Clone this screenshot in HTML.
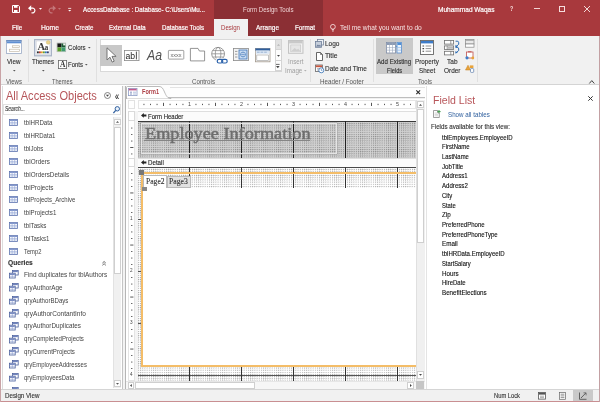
<!DOCTYPE html>
<html><head><meta charset="utf-8"><title>Access</title>
<style>
*{box-sizing:border-box;margin:0;padding:0}
html,body{width:600px;height:402px;overflow:hidden;background:#fff}
body{font-family:"Liberation Sans",sans-serif;font-size:8px;color:#333;position:relative}
.a{position:absolute;white-space:nowrap}
svg{position:absolute;overflow:visible}
#w{position:absolute;left:0;top:0;width:600px;height:402px;will-change:transform}
</style></head><body><div id="w">
<div class="a" style="left:0px;top:0px;width:600px;height:36px;background:#a8393d;"></div>
<div class="a" style="left:214px;top:0px;width:109px;height:36px;background:#8b2f34;"></div>
<div class="a" style="left:214px;top:19.3px;width:34px;height:16.7px;background:#f1f1f1;"></div>
<div class="a" style="left:534px;top:8px;width:6px;height:0.9px;background:#f3d3d4;"></div>
<div class="a" style="left:558.7px;top:5.8px;width:6.4px;height:5.9px;border:0.9px solid #f6dede"></div>
<svg style="left:584px;top:5.8px" width="6" height="6"><path d="M0 0L6 6M6 0L0 6" stroke="#fbeaea" stroke-width="0.9" fill="none"/></svg>
<svg style="left:330.2px;top:23.6px" width="6" height="8"><circle cx="2.9" cy="2.8" r="2.4" fill="none" stroke="#fbeaea" stroke-width="0.8"/><path d="M1.8 5.7h2.2M2 7h1.8" stroke="#fbeaea" stroke-width="0.8"/></svg>
<svg style="left:12px;top:5.3px" width="8" height="8"><path d="M0.5 0.5h6l1 1v6h-7z" fill="none" stroke="#fff" stroke-width="1"/><rect x="2" y="0.5" width="3.5" height="2.3" fill="#fff"/><rect x="2" y="5" width="3.5" height="2.5" fill="#fff"/></svg>
<svg style="left:27.5px;top:5.2px" width="9" height="8"><path d="M1 3.2h4.2a2.4 2.4 0 0 1 0 4.6H3.5" fill="none" stroke="#fff" stroke-width="1.2"/><path d="M0 3.2L3.2 0.3V6.1z" fill="#fff"/></svg>
<svg style="left:38.8px;top:8.4px" width="3" height="2"><path d="M0 0h3L1.5 1.8z" fill="#fff"/></svg>
<svg style="left:46.6px;top:5.2px" width="9" height="8"><path d="M8 3.2H3.8a2.4 2.4 0 0 0 0 4.6H5.5" fill="none" stroke="#c4777a" stroke-width="1.2"/><path d="M9 3.2L5.8 0.3V6.1z" fill="#c4777a"/></svg>
<svg style="left:57.6px;top:8.4px" width="3" height="2"><path d="M0 0h3L1.5 1.8z" fill="#c4777a"/></svg>
<svg style="left:68px;top:7.6px" width="4" height="5"><path d="M0.2 0.4h3" stroke="#fff" stroke-width="0.8"/><path d="M0.2 1.9h3L1.7 3.6z" fill="#fff"/></svg>
<div class="a" style="left:0px;top:36px;width:600px;height:49.4px;background:#f1f1f1;border-bottom:1px solid #d4d4d4"></div>
<div class="a" style="left:28px;top:39px;width:1px;height:43px;background:#e0e0e0;"></div>
<div class="a" style="left:96px;top:39px;width:1px;height:43px;background:#e0e0e0;"></div>
<div class="a" style="left:310.3px;top:39px;width:1px;height:43px;background:#e0e0e0;"></div>
<div class="a" style="left:373px;top:39px;width:1px;height:43px;background:#e0e0e0;"></div>
<div class="a" style="left:477px;top:39px;width:1px;height:43px;background:#e0e0e0;"></div>
<svg style="left:6.2px;top:40.2px" width="16" height="14"><rect x="0.4" y="0.4" width="15" height="13" fill="#fff" stroke="#9aabc6" stroke-width="0.8"/><rect x="0.4" y="0.4" width="15" height="1" fill="#3f6fb5"/><rect x="0.8" y="1.4" width="14.2" height="1.9" fill="#5f8fd2"/><rect x="6.4" y="5.8" width="7.2" height="1.8" fill="#fff" stroke="#bdb29e" stroke-width="0.6"/><rect x="3.4" y="9.2" width="10.2" height="2.2" fill="#fff" stroke="#bdb29e" stroke-width="0.6"/></svg>
<svg style="left:12.5px;top:70px" width="3" height="2"><path d="M0 0h2.6L1.3 1.5z" fill="#555"/></svg>
<svg style="left:34px;top:38.6px" width="18" height="18"><rect x="0.6" y="0.6" width="16.8" height="16.2" fill="#e9edf4" stroke="#a9b3c6" stroke-width="1.2"/><rect x="2.2" y="2" width="13.6" height="13.4" fill="#fff" stroke="#c9cbd0" stroke-width="0.5"/><text x="3.6" y="11" font-family="Liberation Serif,serif" font-size="10.5" font-weight="bold" fill="#3a3a3a">A</text><text x="10.6" y="11" font-family="Liberation Serif,serif" font-size="7.5" font-weight="bold" fill="#3a3a3a">a</text><rect x="3" y="12.4" width="1.8" height="1.9" fill="#2b2b2b"/><rect x="5" y="12.4" width="1.8" height="1.9" fill="#c0392b"/><rect x="7" y="12.4" width="1.8" height="1.9" fill="#e0a02a"/><rect x="9" y="12.4" width="1.8" height="1.9" fill="#5d9a3b"/><rect x="11" y="12.4" width="1.8" height="1.9" fill="#3b76b8"/><rect x="13" y="12.4" width="1.8" height="1.9" fill="#34406e"/><circle cx="14.2" cy="3.4" r="1.9" fill="#ead38c" stroke="#cdb56a" stroke-width="0.4"/></svg>
<svg style="left:42px;top:70px" width="3" height="2"><path d="M0 0h2.6L1.3 1.5z" fill="#555"/></svg>
<svg style="left:57.3px;top:43.1px" width="9" height="9"><rect x="0" y="0" width="8.8" height="8.8" fill="#fff" stroke="#a5a5a5" stroke-width="0.5"/><rect x="0.4" y="0.4" width="4" height="4" fill="#161616"/><rect x="4.4" y="0.4" width="4" height="4" fill="#1f5a35"/><rect x="6.2" y="0.4" width="2.2" height="2" fill="#f2f5ef"/><rect x="0.4" y="4.4" width="4" height="4" fill="#5a9e2e"/><rect x="4.4" y="4.4" width="4" height="4" fill="#3f9a6e"/></svg>
<svg style="left:87.6px;top:47.2px" width="3" height="2"><path d="M0 0h2.6L1.3 1.5z" fill="#555"/></svg>
<svg style="left:57.5px;top:60px" width="9" height="9"><rect x="0.4" y="0.4" width="8.2" height="8.2" fill="#fff" stroke="#666" stroke-width="0.8"/><text x="2" y="7.3" font-family="Liberation Serif,serif" font-size="7.5" font-weight="bold" fill="#333">A</text></svg>
<svg style="left:84.5px;top:64px" width="3" height="2"><path d="M0 0h2.6L1.3 1.5z" fill="#555"/></svg>
<div class="a" style="left:99.5px;top:39px;width:182px;height:32.5px;background:#fff;border:1px solid #d9d9d9"></div>
<div class="a" style="left:100px;top:44.5px;width:22px;height:21px;background:#c8c8c8;"></div>
<svg style="left:105.8px;top:47.2px" width="11" height="16"><path d="M1 0.8v12.2l3-2.8 2.2 4.9 2-0.9-2.2-4.8h4.1z" fill="#fff" stroke="#6a6a6a" stroke-width="0.9" stroke-linejoin="round"/></svg>
<svg style="left:124.3px;top:49.7px" width="16" height="11"><rect x="0.4" y="0.4" width="14.6" height="10.2" fill="#fff" stroke="#8a8a8a" stroke-width="0.8"/><text x="1.4" y="8.6" font-family="Liberation Sans,sans-serif" font-size="8.6" fill="#222" textLength="9.6" lengthAdjust="spacingAndGlyphs">ab</text><path d="M12.4 1.6v7.8" stroke="#222" stroke-width="0.8"/></svg>
<svg style="left:146.6px;top:49px" width="16" height="12"><text x="0" y="11.2" font-family="Liberation Sans,sans-serif" font-size="13.8" font-style="italic" fill="#505050" textLength="15" lengthAdjust="spacingAndGlyphs">Aa</text></svg>
<svg style="left:167.7px;top:50.2px" width="17" height="10"><rect x="0.4" y="0.4" width="15.4" height="8.7" rx="0.6" fill="#fff" stroke="#8a8a8a" stroke-width="0.8"/><text x="2.6" y="6.6" font-family="Liberation Sans,sans-serif" font-size="5" fill="#666" textLength="11" lengthAdjust="spacingAndGlyphs">xxxx</text></svg>
<svg style="left:190.2px;top:48px" width="15" height="14"><path d="M0.4 12.9V0.4h7.6l1.4 2.6h5.2v9.9z" fill="#fff" stroke="#7a7a7a" stroke-width="0.8" stroke-linejoin="round"/></svg>
<svg style="left:211px;top:46.8px" width="18" height="18"><circle cx="7.1" cy="6.8" r="6.4" fill="#fff" stroke="#808080" stroke-width="0.8"/><ellipse cx="7.1" cy="6.8" rx="2.8" ry="6.4" fill="none" stroke="#808080" stroke-width="0.7"/><path d="M0.7 6.8h12.8M1.7 3.6h10.8M1.7 10h10.8" stroke="#808080" stroke-width="0.7"/><rect x="5.2" y="11.4" width="12" height="6" fill="#fff"/><rect x="6.2" y="12.4" width="5.6" height="3.6" rx="1.8" fill="none" stroke="#2b62ab" stroke-width="1.2"/><rect x="10.6" y="12.4" width="5.6" height="3.6" rx="1.8" fill="none" stroke="#2b62ab" stroke-width="1.2"/></svg>
<svg style="left:233px;top:48px" width="16" height="13"><rect x="0.4" y="0.4" width="15" height="12.2" fill="#f4f4f4" stroke="#8a8a8a" stroke-width="0.8"/><path d="M2 3.4h2.4M2 6.2h2.4M2 9h2.4" stroke="#888" stroke-width="0.8"/><rect x="6" y="2" width="8" height="9" fill="#c9dcf2" stroke="#3a72b8" stroke-width="0.8"/><circle cx="10" cy="6.5" r="2.4" fill="#eef4fb" stroke="#3a72b8" stroke-width="0.7"/><path d="M7.6 6.5h4.8M10 4.1v4.8" stroke="#3a72b8" stroke-width="0.5"/></svg>
<svg style="left:254.7px;top:47.7px" width="16" height="14"><rect x="0.4" y="0.4" width="14.6" height="13.4" fill="#fff" stroke="#a0968a" stroke-width="0.8"/><rect x="0.4" y="0.4" width="14.6" height="2.2" fill="#2f5f9e"/><rect x="0.8" y="2.6" width="13.8" height="3.2" fill="#dbe6f4"/><path d="M2 4.2h2.6M5.6 4.2h2.6M9.2 4.2h2.6" stroke="#7f9cc4" stroke-width="0.7"/><rect x="1.8" y="7" width="11.8" height="5.4" fill="#fff" stroke="#9a9a9a" stroke-width="0.6"/></svg>
<div class="a" style="left:274.5px;top:39px;width:7px;height:32.5px;background:#fdfdfd;border:1px solid #d4d4d4"></div>
<div class="a" style="left:274.5px;top:39px;width:7px;height:11.3px;background:#e2e2e2;border:1px solid #d4d4d4"></div>
<div class="a" style="left:274.5px;top:60.3px;width:7px;height:11.2px;background:#fdfdfd;border:1px solid #d4d4d4"></div>
<svg style="left:276.6px;top:43.5px" width="3" height="2"><path d="M0 1.8h3L1.5 0z" fill="#b5b5b5"/></svg>
<svg style="left:276.6px;top:54.8px" width="3" height="2"><path d="M0 0h3L1.5 1.8z" fill="#444"/></svg>
<svg style="left:276.2px;top:63.8px" width="4" height="5"><path d="M0 0.4h3.6" stroke="#444" stroke-width="0.8"/><path d="M0 2h3.6L1.8 4.2z" fill="#444"/></svg>
<svg style="left:288.3px;top:40.4px" width="15.5" height="13.8" viewBox="0 0 14 14" preserveAspectRatio="none"><rect x="0.5" y="0.5" width="13" height="13" fill="#f4f4f4" stroke="#c4c4c4"/><rect x="1" y="1" width="12" height="2.5" fill="#c9c9c9"/><rect x="2.5" y="5" width="9" height="7" fill="#e6e6e6" stroke="#c4c4c4" stroke-width="0.6"/><path d="M3 11.5l3-3.5 2 2 1.2-1.2 2 2.7z" fill="#cfcfcf"/></svg>
<svg style="left:304px;top:70px" width="3" height="2"><path d="M0 0h2.6L1.3 1.5z" fill="#b0b0b0"/></svg>
<svg style="left:315px;top:39px" width="9" height="9"><rect x="2.5" y="0.5" width="6" height="5.5" fill="#eef1f5" stroke="#77839a" stroke-width="0.8"/><rect x="0.5" y="2.5" width="6" height="5.8" fill="#c5cedb" stroke="#6f7f99" stroke-width="0.8"/><path d="M1 7.6l1.8-2.2 1.2 1.2 1-0.9 1.2 1.9z" fill="#6f7f99"/></svg>
<svg style="left:316px;top:52px" width="7" height="9"><path d="M0.5 0.5h4l2 2v6h-6z" fill="#fff" stroke="#555" stroke-width="0.9" stroke-linejoin="round"/><path d="M4.5 0.5v2h2" fill="none" stroke="#555" stroke-width="0.7"/></svg>
<svg style="left:315px;top:64px" width="9" height="9"><rect x="0.5" y="1" width="7" height="6.5" fill="#fff" stroke="#666" stroke-width="0.8"/><rect x="0.9" y="1.4" width="6.2" height="1.8" fill="#c8553d"/><path d="M2 4.6h4M2 6h4" stroke="#888" stroke-width="0.6"/><circle cx="6.3" cy="6.3" r="2.5" fill="#fff" stroke="#2e6db4" stroke-width="0.8"/><path d="M6.3 4.9v1.5h1.1" fill="none" stroke="#2e6db4" stroke-width="0.6"/></svg>
<div class="a" style="left:375.8px;top:37.5px;width:36.8px;height:36.5px;background:#c9c9c9;"></div>
<svg style="left:386.3px;top:41.6px" width="16" height="12"><rect x="0.4" y="0.4" width="9.2" height="10.6" fill="#fff" stroke="#7f8da6" stroke-width="0.8"/><rect x="0.8" y="0.8" width="8.4" height="2.2" fill="#8c9bb4"/><path d="M3.5 0.8v10M6.5 0.8v10M0.8 5.6h8.4M0.8 8.2h8.4" stroke="#9aa7bd" stroke-width="0.6"/><rect x="11" y="0.4" width="4.4" height="10.6" fill="#eaf2fb" stroke="#5a8fd0" stroke-width="0.8"/><rect x="11.4" y="0.8" width="3.6" height="2.2" fill="#4f8fd6"/><path d="M11.4 5.6h3.6M11.4 8.2h3.6" stroke="#7fb0e6" stroke-width="0.6"/><path d="M9.8 4.4h1.4" stroke="#4f8fd6" stroke-width="0.9"/></svg>
<svg style="left:420px;top:40px" width="14" height="15"><rect x="0.5" y="0.5" width="13" height="14" fill="#fff" stroke="#666" stroke-width="0.9"/><rect x="1" y="1" width="12" height="2.4" fill="#3d7cc9"/><path d="M2.5 6h1.6M2.5 8.6h1.6M2.5 11.2h1.6" stroke="#444" stroke-width="1.1"/><path d="M5.6 6h5.6M5.6 8.6h5.6M5.6 11.2h5.6" stroke="#777" stroke-width="0.8"/></svg>
<svg style="left:444px;top:40px" width="16" height="16"><rect x="0.4" y="0.5" width="9.2" height="3.6" fill="#fff" stroke="#707070" stroke-width="0.8"/><rect x="0.4" y="5.9" width="9.2" height="3.6" fill="#fff" stroke="#707070" stroke-width="0.8"/><rect x="0.4" y="11.3" width="9.2" height="3.6" fill="#fff" stroke="#707070" stroke-width="0.8"/><path d="M6.8 0.5v3.6M3.2 5.9v3.6M6.8 11.3v3.6" stroke="#707070" stroke-width="0.7"/><rect x="3.8" y="6.6" width="5.2" height="2.2" fill="#b9b9b9"/><path d="M11.6 1.2h1.6a1.5 1.5 0 0 1 1.5 1.5v1.6l-2.4 2.2" fill="none" stroke="#2e6db4" stroke-width="1"/><path d="M11.2 7.4l0.4-2.6 2.2 1.8z" fill="#2e6db4"/><path d="M11.6 7.4h1.6a1.5 1.5 0 0 1 1.5 1.5v1.6l-2.4 2.2" fill="none" stroke="#2e6db4" stroke-width="1"/><path d="M11.2 13.6l0.4-2.6 2.2 1.8z" fill="#2e6db4"/></svg>
<svg style="left:464.5px;top:39px" width="10" height="9"><rect x="0.5" y="0.5" width="8.5" height="4.5" fill="#e9e9e9" stroke="#888" stroke-width="0.7"/><rect x="0.5" y="5" width="8.5" height="3.2" fill="#fff" stroke="#888" stroke-width="0.7"/><path d="M0.8 1.2h8" stroke="#9a9a9a" stroke-width="1"/></svg>
<svg style="left:464.5px;top:51px" width="10" height="9"><rect x="1.5" y="1" width="6.5" height="6" fill="#fff" stroke="#c0504d" stroke-width="0.8"/><circle cx="2" cy="6.8" r="1.6" fill="#3d7cc9"/><circle cx="7.8" cy="7" r="1.4" fill="#e8a33a"/><path d="M3 0.8h3.5" stroke="#c0504d" stroke-width="1"/></svg>
<svg style="left:464.5px;top:63.5px" width="10" height="9"><path d="M0.5 6L3 1.2 5.5 6z" fill="#e8a33a" stroke="#c47d1b" stroke-width="0.5"/><rect x="4.8" y="1.4" width="3.6" height="2.6" fill="#e8a33a"/><rect x="5.5" y="4.6" width="3.2" height="3.8" rx="0.8" fill="#fff" stroke="#5577a8" stroke-width="0.7"/></svg>
<svg style="left:588.5px;top:79.5px" width="6" height="4"><path d="M0.3 3.5L2.8 0.6L5.3 3.5" fill="none" stroke="#444" stroke-width="1"/></svg>
<div class="a" style="left:0px;top:86px;width:600px;height:303px;background:#fff;"></div>
<svg style="left:103.6px;top:91.6px" width="7" height="7"><circle cx="3.5" cy="3.5" r="3" fill="#fff" stroke="#666" stroke-width="0.8"/><path d="M1.9 2.7h3.2L3.5 4.8z" fill="#444"/></svg>
<div class="a" style="left:3px;top:104px;width:118px;height:10.5px;background:#fff;border:1px solid #e2e2e2"></div>
<svg style="left:113px;top:105.5px" width="7" height="8"><circle cx="4.3" cy="2.8" r="2.2" fill="#eaf2fb" stroke="#2f5f9e" stroke-width="1"/><path d="M2.7 4.4L0.4 7.1" stroke="#2f5f9e" stroke-width="1.3"/></svg>
<div class="a" style="left:113.3px;top:117px;width:8.2px;height:271px;background:#f0f0f0;border-left:1px solid #e2e2e2"></div>
<div class="a" style="left:114px;top:118.7px;width:7px;height:6.6px;background:#fff;border:1px solid #cfcfcf"></div>
<svg style="left:116px;top:121px" width="3" height="2"><path d="M0 1.8h3L1.5 0z" fill="#555"/></svg>
<div class="a" style="left:114px;top:127px;width:7px;height:147px;background:#fff;border:1px solid #cfcfcf"></div>
<div class="a" style="left:114px;top:379.5px;width:7px;height:7.5px;background:#fff;border:1px solid #cfcfcf"></div>
<svg style="left:116px;top:382.5px" width="3" height="2"><path d="M0 0h3L1.5 1.8z" fill="#555"/></svg>
<svg style="left:9px;top:118.8px" width="9" height="8"><rect x="0.4" y="0.4" width="8" height="6" fill="#fff" stroke="#5a71ad" stroke-width="0.8"/><rect x="0.8" y="0.8" width="7.2" height="1.2" fill="#8398cc"/><path d="M3.1 0.8v5.6M5.7 0.8v5.6M0.8 3.4h7.2M0.8 4.9h7.2" stroke="#8ea2d3" stroke-width="0.6"/></svg>
<svg style="left:9px;top:131.7px" width="9" height="8"><rect x="0.4" y="0.4" width="8" height="6" fill="#fff" stroke="#5a71ad" stroke-width="0.8"/><rect x="0.8" y="0.8" width="7.2" height="1.2" fill="#8398cc"/><path d="M3.1 0.8v5.6M5.7 0.8v5.6M0.8 3.4h7.2M0.8 4.9h7.2" stroke="#8ea2d3" stroke-width="0.6"/></svg>
<svg style="left:9px;top:144.7px" width="9" height="8"><rect x="0.4" y="0.4" width="8" height="6" fill="#fff" stroke="#5a71ad" stroke-width="0.8"/><rect x="0.8" y="0.8" width="7.2" height="1.2" fill="#8398cc"/><path d="M3.1 0.8v5.6M5.7 0.8v5.6M0.8 3.4h7.2M0.8 4.9h7.2" stroke="#8ea2d3" stroke-width="0.6"/></svg>
<svg style="left:9px;top:157.6px" width="9" height="8"><rect x="0.4" y="0.4" width="8" height="6" fill="#fff" stroke="#5a71ad" stroke-width="0.8"/><rect x="0.8" y="0.8" width="7.2" height="1.2" fill="#8398cc"/><path d="M3.1 0.8v5.6M5.7 0.8v5.6M0.8 3.4h7.2M0.8 4.9h7.2" stroke="#8ea2d3" stroke-width="0.6"/></svg>
<svg style="left:9px;top:170.5px" width="9" height="8"><rect x="0.4" y="0.4" width="8" height="6" fill="#fff" stroke="#5a71ad" stroke-width="0.8"/><rect x="0.8" y="0.8" width="7.2" height="1.2" fill="#8398cc"/><path d="M3.1 0.8v5.6M5.7 0.8v5.6M0.8 3.4h7.2M0.8 4.9h7.2" stroke="#8ea2d3" stroke-width="0.6"/></svg>
<svg style="left:9px;top:183.5px" width="9" height="8"><rect x="0.4" y="0.4" width="8" height="6" fill="#fff" stroke="#5a71ad" stroke-width="0.8"/><rect x="0.8" y="0.8" width="7.2" height="1.2" fill="#8398cc"/><path d="M3.1 0.8v5.6M5.7 0.8v5.6M0.8 3.4h7.2M0.8 4.9h7.2" stroke="#8ea2d3" stroke-width="0.6"/></svg>
<svg style="left:9px;top:196.4px" width="9" height="8"><rect x="0.4" y="0.4" width="8" height="6" fill="#fff" stroke="#5a71ad" stroke-width="0.8"/><rect x="0.8" y="0.8" width="7.2" height="1.2" fill="#8398cc"/><path d="M3.1 0.8v5.6M5.7 0.8v5.6M0.8 3.4h7.2M0.8 4.9h7.2" stroke="#8ea2d3" stroke-width="0.6"/></svg>
<svg style="left:9px;top:209.3px" width="9" height="8"><rect x="0.4" y="0.4" width="8" height="6" fill="#fff" stroke="#5a71ad" stroke-width="0.8"/><rect x="0.8" y="0.8" width="7.2" height="1.2" fill="#8398cc"/><path d="M3.1 0.8v5.6M5.7 0.8v5.6M0.8 3.4h7.2M0.8 4.9h7.2" stroke="#8ea2d3" stroke-width="0.6"/></svg>
<svg style="left:9px;top:222.2px" width="9" height="8"><rect x="0.4" y="0.4" width="8" height="6" fill="#fff" stroke="#5a71ad" stroke-width="0.8"/><rect x="0.8" y="0.8" width="7.2" height="1.2" fill="#8398cc"/><path d="M3.1 0.8v5.6M5.7 0.8v5.6M0.8 3.4h7.2M0.8 4.9h7.2" stroke="#8ea2d3" stroke-width="0.6"/></svg>
<svg style="left:9px;top:235.2px" width="9" height="8"><rect x="0.4" y="0.4" width="8" height="6" fill="#fff" stroke="#5a71ad" stroke-width="0.8"/><rect x="0.8" y="0.8" width="7.2" height="1.2" fill="#8398cc"/><path d="M3.1 0.8v5.6M5.7 0.8v5.6M0.8 3.4h7.2M0.8 4.9h7.2" stroke="#8ea2d3" stroke-width="0.6"/></svg>
<svg style="left:9px;top:248.1px" width="9" height="8"><rect x="0.4" y="0.4" width="8" height="6" fill="#fff" stroke="#5a71ad" stroke-width="0.8"/><rect x="0.8" y="0.8" width="7.2" height="1.2" fill="#8398cc"/><path d="M3.1 0.8v5.6M5.7 0.8v5.6M0.8 3.4h7.2M0.8 4.9h7.2" stroke="#8ea2d3" stroke-width="0.6"/></svg>
<svg style="left:102.2px;top:261px" width="5" height="5"><path d="M0.4 2.1L2.1 0.5 3.8 2.1M0.4 4.3L2.1 2.7 3.8 4.3" fill="none" stroke="#444" stroke-width="0.8"/></svg>
<svg style="left:9px;top:269.8px" width="10" height="9"><rect x="3.4" y="0.4" width="5.8" height="4.6" fill="#fff" stroke="#4a5f9c" stroke-width="0.8"/><rect x="3.8" y="0.8" width="5" height="1.3" fill="#6f83bd"/><rect x="0.4" y="3.2" width="5.8" height="4.8" fill="#fff" stroke="#4a5f9c" stroke-width="0.8"/><rect x="0.8" y="3.6" width="5" height="1.3" fill="#6f83bd"/><path d="M0.8 6.3h5M3.3 4.8v3" stroke="#7b8fc6" stroke-width="0.5"/></svg>
<svg style="left:9px;top:282.7px" width="10" height="9"><rect x="3.4" y="0.4" width="5.8" height="4.6" fill="#fff" stroke="#4a5f9c" stroke-width="0.8"/><rect x="3.8" y="0.8" width="5" height="1.3" fill="#6f83bd"/><rect x="0.4" y="3.2" width="5.8" height="4.8" fill="#fff" stroke="#4a5f9c" stroke-width="0.8"/><rect x="0.8" y="3.6" width="5" height="1.3" fill="#6f83bd"/><path d="M0.8 6.3h5M3.3 4.8v3" stroke="#7b8fc6" stroke-width="0.5"/></svg>
<svg style="left:9px;top:295.7px" width="10" height="9"><rect x="3.4" y="0.4" width="5.8" height="4.6" fill="#fff" stroke="#4a5f9c" stroke-width="0.8"/><rect x="3.8" y="0.8" width="5" height="1.3" fill="#6f83bd"/><rect x="0.4" y="3.2" width="5.8" height="4.8" fill="#fff" stroke="#4a5f9c" stroke-width="0.8"/><rect x="0.8" y="3.6" width="5" height="1.3" fill="#6f83bd"/><path d="M0.8 6.3h5M3.3 4.8v3" stroke="#7b8fc6" stroke-width="0.5"/></svg>
<svg style="left:9px;top:308.6px" width="10" height="9"><rect x="3.4" y="0.4" width="5.8" height="4.6" fill="#fff" stroke="#4a5f9c" stroke-width="0.8"/><rect x="3.8" y="0.8" width="5" height="1.3" fill="#6f83bd"/><rect x="0.4" y="3.2" width="5.8" height="4.8" fill="#fff" stroke="#4a5f9c" stroke-width="0.8"/><rect x="0.8" y="3.6" width="5" height="1.3" fill="#6f83bd"/><path d="M0.8 6.3h5M3.3 4.8v3" stroke="#7b8fc6" stroke-width="0.5"/></svg>
<svg style="left:9px;top:321.5px" width="10" height="9"><rect x="3.4" y="0.4" width="5.8" height="4.6" fill="#fff" stroke="#4a5f9c" stroke-width="0.8"/><rect x="3.8" y="0.8" width="5" height="1.3" fill="#6f83bd"/><rect x="0.4" y="3.2" width="5.8" height="4.8" fill="#fff" stroke="#4a5f9c" stroke-width="0.8"/><rect x="0.8" y="3.6" width="5" height="1.3" fill="#6f83bd"/><path d="M0.8 6.3h5M3.3 4.8v3" stroke="#7b8fc6" stroke-width="0.5"/></svg>
<svg style="left:9px;top:334.5px" width="10" height="9"><rect x="3.4" y="0.4" width="5.8" height="4.6" fill="#fff" stroke="#4a5f9c" stroke-width="0.8"/><rect x="3.8" y="0.8" width="5" height="1.3" fill="#6f83bd"/><rect x="0.4" y="3.2" width="5.8" height="4.8" fill="#fff" stroke="#4a5f9c" stroke-width="0.8"/><rect x="0.8" y="3.6" width="5" height="1.3" fill="#6f83bd"/><path d="M0.8 6.3h5M3.3 4.8v3" stroke="#7b8fc6" stroke-width="0.5"/></svg>
<svg style="left:9px;top:347.4px" width="10" height="9"><rect x="3.4" y="0.4" width="5.8" height="4.6" fill="#fff" stroke="#4a5f9c" stroke-width="0.8"/><rect x="3.8" y="0.8" width="5" height="1.3" fill="#6f83bd"/><rect x="0.4" y="3.2" width="5.8" height="4.8" fill="#fff" stroke="#4a5f9c" stroke-width="0.8"/><rect x="0.8" y="3.6" width="5" height="1.3" fill="#6f83bd"/><path d="M0.8 6.3h5M3.3 4.8v3" stroke="#7b8fc6" stroke-width="0.5"/></svg>
<svg style="left:9px;top:360.3px" width="10" height="9"><rect x="3.4" y="0.4" width="5.8" height="4.6" fill="#fff" stroke="#4a5f9c" stroke-width="0.8"/><rect x="3.8" y="0.8" width="5" height="1.3" fill="#6f83bd"/><rect x="0.4" y="3.2" width="5.8" height="4.8" fill="#fff" stroke="#4a5f9c" stroke-width="0.8"/><rect x="0.8" y="3.6" width="5" height="1.3" fill="#6f83bd"/><path d="M0.8 6.3h5M3.3 4.8v3" stroke="#7b8fc6" stroke-width="0.5"/></svg>
<svg style="left:9px;top:373.2px" width="10" height="9"><rect x="3.4" y="0.4" width="5.8" height="4.6" fill="#fff" stroke="#4a5f9c" stroke-width="0.8"/><rect x="3.8" y="0.8" width="5" height="1.3" fill="#6f83bd"/><rect x="0.4" y="3.2" width="5.8" height="4.8" fill="#fff" stroke="#4a5f9c" stroke-width="0.8"/><rect x="0.8" y="3.6" width="5" height="1.3" fill="#6f83bd"/><path d="M0.8 6.3h5M3.3 4.8v3" stroke="#7b8fc6" stroke-width="0.5"/></svg>
<svg style="left:9px;top:386.5px" width="10" height="9"><rect x="3.4" y="0.4" width="5.8" height="4.6" fill="#fff" stroke="#4a5f9c" stroke-width="0.8"/><rect x="3.8" y="0.8" width="5" height="1.3" fill="#6f83bd"/><rect x="0.4" y="3.2" width="5.8" height="4.8" fill="#fff" stroke="#4a5f9c" stroke-width="0.8"/><rect x="0.8" y="3.6" width="5" height="1.3" fill="#6f83bd"/><path d="M0.8 6.3h5M3.3 4.8v3" stroke="#7b8fc6" stroke-width="0.5"/></svg>
<div class="a" style="left:122px;top:86px;width:1px;height:303px;background:#c4c4c4;"></div>
<div class="a" style="left:2.2px;top:86px;width:0.8px;height:303px;background:#dcdcdc;"></div>
<div class="a" style="left:123px;top:86px;width:2.2px;height:303px;background:#f3f3f3;"></div>
<div class="a" style="left:125.1px;top:86px;width:1px;height:303px;background:#b5b5b5;"></div>
<div class="a" style="left:126.3px;top:86px;width:298.7px;height:303px;background:#f0f0f0;"></div>
<div class="a" style="left:126.3px;top:85.4px;width:298.7px;height:13.1px;background:#fdfdfd;border-bottom:1px solid #bdbdbd"></div>
<div class="a" style="left:170px;top:86.8px;width:255px;height:0.8px;background:#e3e3e3;"></div>
<svg style="left:126px;top:86px" width="46" height="13"><path d="M0.5 13V1.5a1 1 0 0 1 1-1H33c3 0 4 2 5.5 5.5S41.5 12.5 45 12.5V13z" fill="#fff" stroke="#a9a9a9" stroke-width="0.8"/></svg>
<svg style="left:128.2px;top:88px" width="10" height="9"><rect x="0.4" y="0.4" width="8.6" height="7.2" fill="#fff" stroke="#8c9cc6" stroke-width="0.8"/><rect x="0.8" y="0.8" width="7.8" height="1.6" fill="#c4588c"/><path d="M2 4.2h2M2 6h2" stroke="#6a7fb5" stroke-width="0.8"/><path d="M5 4.2h3M5 6h3" stroke="#9fb0d6" stroke-width="0.8"/></svg>
<svg style="left:416.3px;top:90px" width="4.4" height="4.4"><path d="M0.3 0.3L4.1 4.1M4.1 0.3L0.3 4.1" stroke="#2a2a2a" stroke-width="1.1"/></svg>
<div class="a" style="left:126.3px;top:99px;width:298.7px;height:290px;background:#fff;"></div>
<div class="a" style="left:127.5px;top:100.4px;width:7.8px;height:8.6px;background:#fff;border:1px solid #e2e2e2"></div>
<div class="a" style="left:137.8px;top:100.4px;width:278.4px;height:8.6px;background:#fff;border:1px solid #e6e6e6"></div>
<svg style="left:137.8px;top:100.4px" width="279" height="9"><rect x="5.5" y="3.8" width="0.9" height="1.3" fill="#444"/><rect x="12.1" y="3.8" width="0.9" height="1.3" fill="#444"/><rect x="18.6" y="3.8" width="0.9" height="1.3" fill="#444"/><rect x="25.1" y="2.8" width="0.9" height="3.2" fill="#444"/><rect x="31.6" y="3.8" width="0.9" height="1.3" fill="#444"/><rect x="38.0" y="3.8" width="0.9" height="1.3" fill="#444"/><rect x="44.5" y="3.8" width="0.9" height="1.3" fill="#444"/><rect x="57.5" y="3.8" width="0.9" height="1.3" fill="#444"/><rect x="64.0" y="3.8" width="0.9" height="1.3" fill="#444"/><rect x="70.5" y="3.8" width="0.9" height="1.3" fill="#444"/><rect x="77.0" y="2.8" width="0.9" height="3.2" fill="#444"/><rect x="83.5" y="3.8" width="0.9" height="1.3" fill="#444"/><rect x="90.0" y="3.8" width="0.9" height="1.3" fill="#444"/><rect x="96.5" y="3.8" width="0.9" height="1.3" fill="#444"/><rect x="109.5" y="3.8" width="0.9" height="1.3" fill="#444"/><rect x="116.0" y="3.8" width="0.9" height="1.3" fill="#444"/><rect x="122.5" y="3.8" width="0.9" height="1.3" fill="#444"/><rect x="129.1" y="2.8" width="0.9" height="3.2" fill="#444"/><rect x="135.6" y="3.8" width="0.9" height="1.3" fill="#444"/><rect x="142.1" y="3.8" width="0.9" height="1.3" fill="#444"/><rect x="148.6" y="3.8" width="0.9" height="1.3" fill="#444"/><rect x="161.6" y="3.8" width="0.9" height="1.3" fill="#444"/><rect x="168.1" y="3.8" width="0.9" height="1.3" fill="#444"/><rect x="174.6" y="3.8" width="0.9" height="1.3" fill="#444"/><rect x="181.1" y="2.8" width="0.9" height="3.2" fill="#444"/><rect x="187.6" y="3.8" width="0.9" height="1.3" fill="#444"/><rect x="194.1" y="3.8" width="0.9" height="1.3" fill="#444"/><rect x="200.6" y="3.8" width="0.9" height="1.3" fill="#444"/><rect x="213.6" y="3.8" width="0.9" height="1.3" fill="#444"/><rect x="220.1" y="3.8" width="0.9" height="1.3" fill="#444"/><rect x="226.6" y="3.8" width="0.9" height="1.3" fill="#444"/><rect x="233.1" y="2.8" width="0.9" height="3.2" fill="#444"/><rect x="239.6" y="3.8" width="0.9" height="1.3" fill="#444"/><rect x="246.1" y="3.8" width="0.9" height="1.3" fill="#444"/><rect x="252.6" y="3.8" width="0.9" height="1.3" fill="#444"/><rect x="265.6" y="3.8" width="0.9" height="1.3" fill="#444"/><rect x="272.1" y="3.8" width="0.9" height="1.3" fill="#444"/></svg>
<div class="a" style="left:127.5px;top:111px;width:7.8px;height:270px;background:#fff;border:1px solid #e4e4e4"></div>
<div class="a" style="left:135.3px;top:111px;width:2.5px;height:270px;background:#f4f4f4;"></div>
<svg style="left:127.7px;top:111px" width="8" height="270"><rect x="3.1" y="16.6" width="1.3" height="0.9" fill="#444"/><rect x="3.1" y="23.1" width="1.3" height="0.9" fill="#444"/><rect x="3.1" y="29.6" width="1.3" height="0.9" fill="#444"/><rect x="2.2" y="36.0" width="3.2" height="0.9" fill="#444"/><rect x="3.1" y="42.5" width="1.3" height="0.9" fill="#444"/><rect x="3.1" y="62.0" width="1.3" height="0.9" fill="#444"/><rect x="3.1" y="68.5" width="1.3" height="0.9" fill="#444"/><rect x="3.1" y="75.0" width="1.3" height="0.9" fill="#444"/><rect x="2.2" y="81.5" width="3.2" height="0.9" fill="#444"/><rect x="3.1" y="88.0" width="1.3" height="0.9" fill="#444"/><rect x="3.1" y="94.5" width="1.3" height="0.9" fill="#444"/><rect x="3.1" y="101.0" width="1.3" height="0.9" fill="#444"/><rect x="3.1" y="114.0" width="1.3" height="0.9" fill="#444"/><rect x="3.1" y="120.5" width="1.3" height="0.9" fill="#444"/><rect x="3.1" y="127.0" width="1.3" height="0.9" fill="#444"/><rect x="2.2" y="133.6" width="3.2" height="0.9" fill="#444"/><rect x="3.1" y="140.1" width="1.3" height="0.9" fill="#444"/><rect x="3.1" y="146.6" width="1.3" height="0.9" fill="#444"/><rect x="3.1" y="153.1" width="1.3" height="0.9" fill="#444"/><rect x="3.1" y="166.1" width="1.3" height="0.9" fill="#444"/><rect x="3.1" y="172.6" width="1.3" height="0.9" fill="#444"/><rect x="3.1" y="179.1" width="1.3" height="0.9" fill="#444"/><rect x="2.2" y="185.6" width="3.2" height="0.9" fill="#444"/><rect x="3.1" y="192.1" width="1.3" height="0.9" fill="#444"/><rect x="3.1" y="198.6" width="1.3" height="0.9" fill="#444"/><rect x="3.1" y="205.1" width="1.3" height="0.9" fill="#444"/><rect x="3.1" y="218.1" width="1.3" height="0.9" fill="#444"/><rect x="3.1" y="224.6" width="1.3" height="0.9" fill="#444"/><rect x="3.1" y="231.1" width="1.3" height="0.9" fill="#444"/><rect x="2.2" y="237.6" width="3.2" height="0.9" fill="#444"/><rect x="3.1" y="244.1" width="1.3" height="0.9" fill="#444"/><rect x="3.1" y="250.6" width="1.3" height="0.9" fill="#444"/><rect x="3.1" y="257.1" width="1.3" height="0.9" fill="#444"/></svg>
<div class="a" style="left:127.5px;top:111.2px;width:7.8px;height:10px;background:#fff;border:1px solid #dadada"></div>
<div class="a" style="left:137.8px;top:111.2px;width:278.4px;height:10px;background:#fbfbfb;border-top:1px solid #dedede"></div>
<svg style="left:140.5px;top:113.2px" width="6" height="5"><path d="M0 2.4L2.8 0v1.4h2.6v2H2.8v1.4z" fill="#222"/></svg>
<div class="a" style="left:127.5px;top:157.5px;width:7.8px;height:9.7px;background:#fff;border:1px solid #dadada"></div>
<div class="a" style="left:137.8px;top:157.5px;width:278.4px;height:9.7px;background:#fbfbfb;border-top:1px solid #dedede"></div>
<svg style="left:140.5px;top:159.5px" width="6" height="5"><path d="M0 2.4L2.8 0v1.4h2.6v2H2.8v1.4z" fill="#222"/></svg>
<div class="a" style="left:137.8px;top:121px;width:278.4px;height:36.5px;background-color:#d1d1d1;background-image:radial-gradient(circle at 0.5px 0.5px,#8c8c8c 0.5px,transparent 0.72px);background-size:2.1667px 2.1667px;background-position:0.00px 0px"></div>
<div class="a" style="left:137.8px;top:121px;width:278.4px;height:0.9px;background:#3a3a3a;"></div>
<div class="a" style="left:188.5px;top:121px;width:1px;height:36.5px;background:#222;"></div>
<div class="a" style="left:240.5px;top:121px;width:1px;height:36.5px;background:#222;"></div>
<div class="a" style="left:292.5px;top:121px;width:1px;height:36.5px;background:#222;"></div>
<div class="a" style="left:344.7px;top:121px;width:1px;height:36.5px;background:#222;"></div>
<div class="a" style="left:397.0px;top:121px;width:1px;height:36.5px;background:#222;"></div>
<div class="a" style="left:141px;top:123.2px;width:196px;height:31px;border:1px solid #e4e4e4;box-shadow:0 0 0 0.5px #9c9c9c"></div>
<div class="a" style="left:144.3px;top:140.3px;width:165.7px;height:1.1px;background:#858585;"></div>
<div class="a" style="left:137.8px;top:167px;width:278.4px;height:214px;background-color:#fff;background-image:radial-gradient(circle at 0.5px 0.5px,#a6a6a6 0.5px,transparent 0.72px);background-size:2.1667px 2.1667px;background-position:0.00px 0px"></div>
<div class="a" style="left:137.8px;top:167px;width:278.4px;height:0.9px;background:#4a4a4a;"></div>
<div class="a" style="left:137.8px;top:218.5px;width:278.4px;height:0.9px;background:#555;"></div>
<div class="a" style="left:137.8px;top:270.5px;width:278.4px;height:0.9px;background:#555;"></div>
<div class="a" style="left:137.8px;top:322.5px;width:278.4px;height:0.9px;background:#555;"></div>
<div class="a" style="left:137.8px;top:374.5px;width:278.4px;height:0.9px;background:#555;"></div>
<div class="a" style="left:188.5px;top:167px;width:1px;height:214px;background:#333;"></div>
<div class="a" style="left:240.5px;top:167px;width:1px;height:214px;background:#333;"></div>
<div class="a" style="left:292.5px;top:167px;width:1px;height:214px;background:#333;"></div>
<div class="a" style="left:344.7px;top:167px;width:1px;height:214px;background:#333;"></div>
<div class="a" style="left:397.0px;top:167px;width:1px;height:214px;background:#333;"></div>
<div class="a" style="left:141px;top:172.5px;width:275.2px;height:194.8px;background:#fff;"></div>
<div class="a" style="left:141px;top:173px;width:275.2px;height:14.8px;background-color:#fff;background-image:radial-gradient(circle at 0.5px 0.5px,#a6a6a6 0.5px,transparent 0.72px);background-size:2.1667px 2.1667px;background-position:-3.20px 0px"></div>
<div class="a" style="left:188.5px;top:173px;width:1px;height:14.8px;background:#333;"></div>
<div class="a" style="left:240.5px;top:173px;width:1px;height:14.8px;background:#333;"></div>
<div class="a" style="left:292.5px;top:173px;width:1px;height:14.8px;background:#333;"></div>
<div class="a" style="left:344.7px;top:173px;width:1px;height:14.8px;background:#333;"></div>
<div class="a" style="left:397.0px;top:173px;width:1px;height:14.8px;background:#333;"></div>
<div class="a" style="left:141px;top:187.8px;width:275.2px;height:179px;background:#fff;"></div>
<div class="a" style="left:141px;top:172.2px;width:275.2px;height:1.6px;background:#f4bd68;"></div>
<div class="a" style="left:140.9px;top:172.2px;width:1.7px;height:195px;background:#f4bd68;"></div>
<div class="a" style="left:141px;top:365.1px;width:275.2px;height:1.7px;background:#f4bd68;"></div>
<div class="a" style="left:143.3px;top:175px;width:23.8px;height:12.8px;background:#fff;border:1px solid #b9b9b9;border-bottom:none"></div>
<div class="a" style="left:166.9px;top:175.6px;width:24px;height:12.2px;background:#e1e1e1;border:1px solid #b9b9b9"></div>
<div class="a" style="left:139px;top:169.5px;width:5px;height:5px;background:#777;"></div>
<div class="a" style="left:142px;top:186.7px;width:4.5px;height:4.7px;background:#888;"></div>
<div class="a" style="left:293px;top:171.5px;width:2.2px;height:1.6px;background:#e08a1a;"></div>
<div class="a" style="left:416.3px;top:100.4px;width:8.5px;height:281px;background:#f0f0f0;border-left:1px solid #e0e0e0"></div>
<div class="a" style="left:417px;top:101px;width:7.4px;height:7px;background:#fff;border:1px solid #cfcfcf"></div>
<svg style="left:419.2px;top:103.5px" width="3" height="2"><path d="M0 1.8h3L1.5 0z" fill="#444"/></svg>
<div class="a" style="left:417px;top:108.5px;width:7.4px;height:134px;background:#fff;border:1px solid #cfcfcf"></div>
<div class="a" style="left:416.6px;top:371.2px;width:7.6px;height:7.4px;background:#fff;border:1px solid #cfcfcf"></div>
<svg style="left:419px;top:374.2px" width="3" height="2"><path d="M0 0h3L1.5 1.8z" fill="#444"/></svg>
<div class="a" style="left:126.3px;top:380.6px;width:298.7px;height:8.6px;background:#f6f6f6;border-top:1px solid #e6e6e6"></div>
<div class="a" style="left:127.6px;top:381.6px;width:6.6px;height:7px;background:#fff;border:1px solid #cfcfcf"></div>
<svg style="left:130px;top:383.6px" width="2" height="3"><path d="M1.8 0v3L0 1.5z" fill="#444"/></svg>
<div class="a" style="left:135px;top:381.6px;width:119.5px;height:7px;background:#fff;border:1px solid #cfcfcf"></div>
<div class="a" style="left:406.8px;top:381.6px;width:7.4px;height:7px;background:#fff;border:1px solid #cfcfcf"></div>
<svg style="left:409.8px;top:383.6px" width="2" height="3"><path d="M0 0v3L1.8 1.5z" fill="#444"/></svg>
<div class="a" style="left:416.2px;top:380.8px;width:8.2px;height:8.4px;background:#c6c6c6;"></div>
<div class="a" style="left:425.6px;top:86px;width:175px;height:303px;background:#fff;border-left:1px solid #e4e4e4"></div>
<svg style="left:587.5px;top:95.5px" width="5" height="5"><path d="M0.3 0.3L4.7 4.7M4.7 0.3L0.3 4.7" stroke="#333" stroke-width="1"/></svg>
<svg style="left:432.6px;top:110px" width="8" height="8"><path d="M0.5 0.5h4.2v2.4h1.6v4.6h-5.8z" fill="#fff" stroke="#777" stroke-width="0.7"/><path d="M1.6 3h2.4M1.6 4.4h3.4M1.6 5.8h3.4" stroke="#aaa" stroke-width="0.5"/><path d="M6 0v3.2M4.4 1.6h3.2" stroke="#3f9a4a" stroke-width="1"/></svg>
<div class="a" style="left:0px;top:389px;width:600px;height:13px;background:#f1f1f1;border-top:1px solid #d5d5d5"></div>
<div class="a" style="left:0px;top:401px;width:600px;height:1px;background:#c98f92;"></div>
<div class="a" style="left:573px;top:390px;width:20px;height:11px;background:#c9c9c9;"></div>
<svg style="left:538px;top:391.5px" width="8" height="8"><rect x="0.5" y="0.5" width="7" height="6.6" fill="#fff" stroke="#555" stroke-width="0.8"/><rect x="0.8" y="0.8" width="6.4" height="1.8" fill="#555"/><path d="M2 4.2h4M2 5.6h4" stroke="#777" stroke-width="0.6"/></svg>
<svg style="left:559px;top:391.5px" width="7" height="8"><rect x="0.5" y="0.5" width="6" height="6.8" fill="#fff" stroke="#666" stroke-width="0.7"/><path d="M1.6 2.2h3.8M1.6 3.9h3.8M1.6 5.6h3.8" stroke="#666" stroke-width="0.7"/></svg>
<svg style="left:579px;top:391.5px" width="8" height="8"><path d="M0.5 0.5v6.8h7" fill="none" stroke="#555" stroke-width="0.9"/><path d="M2 6L6.8 1" stroke="#555" stroke-width="0.9"/><path d="M4.5 0.8h2.6v2.6" fill="none" stroke="#555" stroke-width="0.7"/></svg>
<div class="a" style="left:598.6px;top:36px;width:1.4px;height:366px;background:#c3a0a3;"></div>
<div class="a" style="left:0px;top:36px;width:1.1px;height:366px;background:#c9a3a6;"></div>
<div class="a" style="left:82.5px;top:4.75px;font:normal normal 7.3px/9.49px 'Liberation Sans',sans-serif;color:#fff;transform:scaleX(0.8522);transform-origin:0 0;-webkit-text-stroke:0.2px #fff;">AccessDatabase : Database- C:\Users\Mu...</div>
<div class="a" style="left:242.5px;top:4.75px;font:normal normal 7.3px/9.49px 'Liberation Sans',sans-serif;color:#efd3d4;transform:scaleX(0.8319);transform-origin:0 0;">Form Design Tools</div>
<div class="a" style="left:438px;top:4.75px;font:normal normal 7.3px/9.49px 'Liberation Sans',sans-serif;color:#fff;transform:scaleX(0.8968);transform-origin:0 0;-webkit-text-stroke:0.2px #fff;">Muhammad Waqas</div>
<div class="a" style="left:510.3px;top:3.89px;font:normal bold 7.4px/9.62px 'Liberation Sans',sans-serif;color:#f6dcdc;transform:scaleX(0.7308);transform-origin:0 0;">?</div>
<div class="a" style="left:11.8px;top:22.62px;font:normal normal 7.5px/9.75px 'Liberation Sans',sans-serif;color:#fff;transform:scaleX(0.8434);transform-origin:0 0;-webkit-text-stroke:0.2px #fff;">File</div>
<div class="a" style="left:41px;top:22.62px;font:normal normal 7.5px/9.75px 'Liberation Sans',sans-serif;color:#fff;transform:scaleX(0.8993);transform-origin:0 0;-webkit-text-stroke:0.2px #fff;">Home</div>
<div class="a" style="left:74.5px;top:22.62px;font:normal normal 7.5px/9.75px 'Liberation Sans',sans-serif;color:#fff;transform:scaleX(0.8217);transform-origin:0 0;-webkit-text-stroke:0.2px #fff;">Create</div>
<div class="a" style="left:108.8px;top:22.62px;font:normal normal 7.5px/9.75px 'Liberation Sans',sans-serif;color:#fff;transform:scaleX(0.8074);transform-origin:0 0;-webkit-text-stroke:0.2px #fff;">External Data</div>
<div class="a" style="left:162px;top:22.62px;font:normal normal 7.5px/9.75px 'Liberation Sans',sans-serif;color:#fff;transform:scaleX(0.8145);transform-origin:0 0;-webkit-text-stroke:0.2px #fff;">Database Tools</div>
<div class="a" style="left:256px;top:22.62px;font:normal normal 7.5px/9.75px 'Liberation Sans',sans-serif;color:#fff;transform:scaleX(0.8618);transform-origin:0 0;-webkit-text-stroke:0.2px #fff;">Arrange</div>
<div class="a" style="left:294.5px;top:22.62px;font:normal normal 7.5px/9.75px 'Liberation Sans',sans-serif;color:#fff;transform:scaleX(0.8416);transform-origin:0 0;-webkit-text-stroke:0.2px #fff;">Format</div>
<div class="a" style="left:221px;top:22.62px;font:normal normal 7.5px/9.75px 'Liberation Sans',sans-serif;color:#a8393d;transform:scaleX(0.8134);transform-origin:0 0;">Design</div>
<div class="a" style="left:340px;top:22.62px;font:normal normal 7.5px/9.75px 'Liberation Sans',sans-serif;color:#f6e4e4;transform:scaleX(0.8837);transform-origin:0 0;">Tell me what you want to do</div>
<div class="a" style="left:6px;top:76.75px;font:normal normal 7px/9.1px 'Liberation Sans',sans-serif;color:#555;transform:scaleX(0.8627);transform-origin:0 0;">Views</div>
<div class="a" style="left:52px;top:76.75px;font:normal normal 7px/9.1px 'Liberation Sans',sans-serif;color:#555;transform:scaleX(0.8104);transform-origin:0 0;">Themes</div>
<div class="a" style="left:192px;top:76.75px;font:normal normal 7px/9.1px 'Liberation Sans',sans-serif;color:#555;transform:scaleX(0.882);transform-origin:0 0;">Controls</div>
<div class="a" style="left:320px;top:76.75px;font:normal normal 7px/9.1px 'Liberation Sans',sans-serif;color:#555;transform:scaleX(0.8933);transform-origin:0 0;">Header / Footer</div>
<div class="a" style="left:418px;top:76.75px;font:normal normal 7px/9.1px 'Liberation Sans',sans-serif;color:#555;transform:scaleX(0.8566);transform-origin:0 0;">Tools</div>
<div class="a" style="left:7px;top:57.26px;font:normal normal 7.3px/9.49px 'Liberation Sans',sans-serif;color:#2e2e2e;transform:scaleX(0.8606);transform-origin:0 0;-webkit-text-stroke:0.12px #2e2e2e;">View</div>
<div class="a" style="left:32px;top:57.26px;font:normal normal 7.3px/9.49px 'Liberation Sans',sans-serif;color:#2e2e2e;transform:scaleX(0.8346);transform-origin:0 0;-webkit-text-stroke:0.12px #2e2e2e;">Themes</div>
<div class="a" style="left:68px;top:42.92px;font:normal normal 7.5px/9.75px 'Liberation Sans',sans-serif;color:#2e2e2e;transform:scaleX(0.8115);transform-origin:0 0;-webkit-text-stroke:0.12px #2e2e2e;">Colors</div>
<div class="a" style="left:68px;top:59.83px;font:normal normal 7.5px/9.75px 'Liberation Sans',sans-serif;color:#2e2e2e;transform:scaleX(0.794);transform-origin:0 0;-webkit-text-stroke:0.12px #2e2e2e;">Fonts</div>
<div class="a" style="left:288px;top:57.46px;font:normal normal 7.3px/9.49px 'Liberation Sans',sans-serif;color:#a0a0a0;transform:scaleX(0.8493);transform-origin:0 0;">Insert</div>
<div class="a" style="left:285.2px;top:66.05px;font:normal normal 7.3px/9.49px 'Liberation Sans',sans-serif;color:#a0a0a0;transform:scaleX(0.853);transform-origin:0 0;">Image</div>
<div class="a" style="left:325px;top:39.05px;font:normal normal 7.3px/9.49px 'Liberation Sans',sans-serif;color:#2e2e2e;transform:scaleX(0.8932);transform-origin:0 0;-webkit-text-stroke:0.12px #2e2e2e;">Logo</div>
<div class="a" style="left:325px;top:51.46px;font:normal normal 7.3px/9.49px 'Liberation Sans',sans-serif;color:#2e2e2e;transform:scaleX(0.9249);transform-origin:0 0;-webkit-text-stroke:0.12px #2e2e2e;">Title</div>
<div class="a" style="left:325px;top:64.05px;font:normal normal 7.3px/9.49px 'Liberation Sans',sans-serif;color:#2e2e2e;transform:scaleX(0.8806);transform-origin:0 0;-webkit-text-stroke:0.12px #2e2e2e;">Date and Time</div>
<div class="a" style="left:376.8px;top:57.26px;font:normal normal 7.3px/9.49px 'Liberation Sans',sans-serif;color:#2e2e2e;transform:scaleX(0.8431);transform-origin:0 0;-webkit-text-stroke:0.12px #2e2e2e;">Add Existing</div>
<div class="a" style="left:386.8px;top:65.75px;font:normal normal 7.3px/9.49px 'Liberation Sans',sans-serif;color:#2e2e2e;transform:scaleX(0.7807);transform-origin:0 0;-webkit-text-stroke:0.12px #2e2e2e;">Fields</div>
<div class="a" style="left:415px;top:57.26px;font:normal normal 7.3px/9.49px 'Liberation Sans',sans-serif;color:#2e2e2e;transform:scaleX(0.863);transform-origin:0 0;-webkit-text-stroke:0.12px #2e2e2e;">Property</div>
<div class="a" style="left:418.8px;top:65.75px;font:normal normal 7.3px/9.49px 'Liberation Sans',sans-serif;color:#2e2e2e;transform:scaleX(0.8491);transform-origin:0 0;-webkit-text-stroke:0.12px #2e2e2e;">Sheet</div>
<div class="a" style="left:446.5px;top:57.26px;font:normal normal 7.3px/9.49px 'Liberation Sans',sans-serif;color:#2e2e2e;transform:scaleX(0.8924);transform-origin:0 0;-webkit-text-stroke:0.12px #2e2e2e;">Tab</div>
<div class="a" style="left:443.5px;top:65.75px;font:normal normal 7.3px/9.49px 'Liberation Sans',sans-serif;color:#2e2e2e;transform:scaleX(0.8844);transform-origin:0 0;-webkit-text-stroke:0.12px #2e2e2e;">Order</div>
<div class="a" style="left:5.5px;top:88.7px;font:normal normal 12px/15.6px 'Liberation Sans',sans-serif;color:#b6555a;transform:scaleX(0.9209);transform-origin:0 0;">All Access Objects</div>
<div class="a" style="left:114.8px;top:89.7px;font:normal normal 10px/13.0px 'Liberation Sans',sans-serif;color:#222;transform:scaleX(0.7191);transform-origin:0 0;-webkit-text-stroke:0.12px #222;">«</div>
<div class="a" style="left:5px;top:104.88px;font:italic normal 6.8px/8.84px 'Liberation Sans',sans-serif;color:#333;transform:scaleX(0.7352);transform-origin:0 0;-webkit-text-stroke:0.12px #333;">Search...</div>
<div class="a" style="left:23.7px;top:117.85px;font:normal normal 7px/9.1px 'Liberation Sans',sans-serif;color:#444;transform:scaleX(0.8793);transform-origin:0 0;">tblHRData</div>
<div class="a" style="left:23.7px;top:130.78px;font:normal normal 7px/9.1px 'Liberation Sans',sans-serif;color:#444;transform:scaleX(0.8677);transform-origin:0 0;">tblHRData1</div>
<div class="a" style="left:23.7px;top:143.71px;font:normal normal 7px/9.1px 'Liberation Sans',sans-serif;color:#444;transform:scaleX(0.8744);transform-origin:0 0;">tblJobs</div>
<div class="a" style="left:23.7px;top:156.64px;font:normal normal 7px/9.1px 'Liberation Sans',sans-serif;color:#444;transform:scaleX(0.8994);transform-origin:0 0;">tblOrders</div>
<div class="a" style="left:23.7px;top:169.57px;font:normal normal 7px/9.1px 'Liberation Sans',sans-serif;color:#444;transform:scaleX(0.8986);transform-origin:0 0;">tblOrdersDetails</div>
<div class="a" style="left:23.7px;top:182.5px;font:normal normal 7px/9.1px 'Liberation Sans',sans-serif;color:#444;transform:scaleX(0.8994);transform-origin:0 0;">tblProjects</div>
<div class="a" style="left:23.7px;top:195.43px;font:normal normal 7px/9.1px 'Liberation Sans',sans-serif;color:#444;transform:scaleX(0.8561);transform-origin:0 0;">tblProjects_Archive</div>
<div class="a" style="left:23.7px;top:208.36px;font:normal normal 7px/9.1px 'Liberation Sans',sans-serif;color:#444;transform:scaleX(0.8858);transform-origin:0 0;">tblProjects1</div>
<div class="a" style="left:23.7px;top:221.29px;font:normal normal 7px/9.1px 'Liberation Sans',sans-serif;color:#444;transform:scaleX(0.8855);transform-origin:0 0;">tblTasks</div>
<div class="a" style="left:23.7px;top:234.22px;font:normal normal 7px/9.1px 'Liberation Sans',sans-serif;color:#444;transform:scaleX(0.8702);transform-origin:0 0;">tblTasks1</div>
<div class="a" style="left:23.7px;top:247.15px;font:normal normal 7px/9.1px 'Liberation Sans',sans-serif;color:#444;transform:scaleX(0.828);transform-origin:0 0;">Temp2</div>
<div class="a" style="left:8px;top:257.96px;font:normal bold 7.6px/9.88px 'Liberation Sans',sans-serif;color:#333;transform:scaleX(0.8769);transform-origin:0 0;-webkit-text-stroke:0.12px #333;">Queries</div>
<div class="a" style="left:23.7px;top:269.75px;font:normal normal 7px/9.1px 'Liberation Sans',sans-serif;color:#444;transform:scaleX(0.9176);transform-origin:0 0;">Find duplicates for tblAuthors</div>
<div class="a" style="left:23.7px;top:282.68px;font:normal normal 7px/9.1px 'Liberation Sans',sans-serif;color:#444;transform:scaleX(0.8969);transform-origin:0 0;">qryAuthorAge</div>
<div class="a" style="left:23.7px;top:295.61px;font:normal normal 7px/9.1px 'Liberation Sans',sans-serif;color:#444;transform:scaleX(0.8711);transform-origin:0 0;">qryAuthorBDays</div>
<div class="a" style="left:23.7px;top:308.54px;font:normal normal 7px/9.1px 'Liberation Sans',sans-serif;color:#444;transform:scaleX(0.9302);transform-origin:0 0;">qryAuthorContantInfo</div>
<div class="a" style="left:23.7px;top:321.47px;font:normal normal 7px/9.1px 'Liberation Sans',sans-serif;color:#444;transform:scaleX(0.9027);transform-origin:0 0;">qryAuthorDuplicates</div>
<div class="a" style="left:23.7px;top:334.4px;font:normal normal 7px/9.1px 'Liberation Sans',sans-serif;color:#444;transform:scaleX(0.8697);transform-origin:0 0;">qryCompletedProjects</div>
<div class="a" style="left:23.7px;top:347.33px;font:normal normal 7px/9.1px 'Liberation Sans',sans-serif;color:#444;transform:scaleX(0.8722);transform-origin:0 0;">qryCurrentProjects</div>
<div class="a" style="left:23.7px;top:360.26px;font:normal normal 7px/9.1px 'Liberation Sans',sans-serif;color:#444;transform:scaleX(0.8507);transform-origin:0 0;">qryEmployeeAddresses</div>
<div class="a" style="left:23.7px;top:373.19px;font:normal normal 7px/9.1px 'Liberation Sans',sans-serif;color:#444;transform:scaleX(0.8522);transform-origin:0 0;">qryEmployeesData</div>
<div class="a" style="left:142px;top:88.31px;font:normal bold 6.9px/8.97px 'Liberation Sans',sans-serif;color:#ae3f46;transform:scaleX(0.8071);transform-origin:0 0;">Form1</div>
<div class="a" style="left:187.8px;top:101.42px;font:normal normal 5.5px/7.15px 'Liberation Sans',sans-serif;color:#444;transform:scaleX(0.9796);transform-origin:0 0;">1</div>
<div class="a" style="left:239.8px;top:101.42px;font:normal normal 5.5px/7.15px 'Liberation Sans',sans-serif;color:#444;transform:scaleX(0.9796);transform-origin:0 0;">2</div>
<div class="a" style="left:291.8px;top:101.42px;font:normal normal 5.5px/7.15px 'Liberation Sans',sans-serif;color:#444;transform:scaleX(0.9796);transform-origin:0 0;">3</div>
<div class="a" style="left:343.8px;top:101.42px;font:normal normal 5.5px/7.15px 'Liberation Sans',sans-serif;color:#444;transform:scaleX(0.9796);transform-origin:0 0;">4</div>
<div class="a" style="left:395.8px;top:101.42px;font:normal normal 5.5px/7.15px 'Liberation Sans',sans-serif;color:#444;transform:scaleX(0.9796);transform-origin:0 0;">5</div>
<div class="a" style="left:130.2px;top:215.43px;font:normal normal 5.5px/7.15px 'Liberation Sans',sans-serif;color:#444;transform:scaleX(0.849);transform-origin:0 0;">1</div>
<div class="a" style="left:130.2px;top:267.43px;font:normal normal 5.5px/7.15px 'Liberation Sans',sans-serif;color:#444;transform:scaleX(0.849);transform-origin:0 0;">2</div>
<div class="a" style="left:130.2px;top:319.43px;font:normal normal 5.5px/7.15px 'Liberation Sans',sans-serif;color:#444;transform:scaleX(0.849);transform-origin:0 0;">3</div>
<div class="a" style="left:130.2px;top:371.43px;font:normal normal 5.5px/7.15px 'Liberation Sans',sans-serif;color:#444;transform:scaleX(0.849);transform-origin:0 0;">4</div>
<div class="a" style="left:148px;top:113.02px;font:normal normal 6.9px/8.97px 'Liberation Sans',sans-serif;color:#222;transform:scaleX(0.8696);transform-origin:0 0;-webkit-text-stroke:0.12px #222;">Form Header</div>
<div class="a" style="left:148px;top:159.16px;font:normal normal 6.9px/8.97px 'Liberation Sans',sans-serif;color:#222;transform:scaleX(0.8965);transform-origin:0 0;-webkit-text-stroke:0.12px #222;">Detail</div>
<div class="a" style="left:144.5px;top:122.66px;font:normal normal 17.3px/22.49px 'Liberation Serif',serif;color:#6e6e6e;transform:scaleX(1.0546);transform-origin:0 0;-webkit-text-stroke:0.5px #6e6e6e;">Employee Information</div>
<div class="a" style="left:145.6px;top:175.78px;font:normal normal 8.8px/11.44px 'Liberation Serif',serif;color:#333;transform:scaleX(0.8651);transform-origin:0 0;-webkit-text-stroke:0.12px #333;">Page2</div>
<div class="a" style="left:169.4px;top:176.08px;font:normal normal 8.8px/11.44px 'Liberation Serif',serif;color:#333;transform:scaleX(0.8744);transform-origin:0 0;-webkit-text-stroke:0.12px #333;">Page3</div>
<div class="a" style="left:432.8px;top:92.66px;font:normal normal 11.3px/14.69px 'Liberation Sans',sans-serif;color:#b8565a;transform:scaleX(0.9332);transform-origin:0 0;">Field List</div>
<div class="a" style="left:447.8px;top:110.88px;font:normal normal 6.8px/8.84px 'Liberation Sans',sans-serif;color:#2f5f9e;transform:scaleX(0.9143);transform-origin:0 0;">Show all tables</div>
<div class="a" style="left:431px;top:122.78px;font:normal normal 6.8px/8.84px 'Liberation Sans',sans-serif;color:#333;transform:scaleX(0.9131);transform-origin:0 0;-webkit-text-stroke:0.12px #333;">Fields available for this view:</div>
<div class="a" style="left:441.8px;top:133.58px;font:normal normal 6.8px/8.84px 'Liberation Sans',sans-serif;color:#111;transform:scaleX(0.8856);transform-origin:0 0;-webkit-text-stroke:0.12px #111;">tblEmployees.EmployeeID</div>
<div class="a" style="left:441.8px;top:143.29px;font:normal normal 6.8px/8.84px 'Liberation Sans',sans-serif;color:#111;transform:scaleX(0.8837);transform-origin:0 0;-webkit-text-stroke:0.12px #111;">FirstName</div>
<div class="a" style="left:441.8px;top:153.0px;font:normal normal 6.8px/8.84px 'Liberation Sans',sans-serif;color:#111;transform:scaleX(0.865);transform-origin:0 0;-webkit-text-stroke:0.12px #111;">LastName</div>
<div class="a" style="left:441.8px;top:162.71px;font:normal normal 6.8px/8.84px 'Liberation Sans',sans-serif;color:#111;transform:scaleX(0.9003);transform-origin:0 0;-webkit-text-stroke:0.12px #111;">JobTitle</div>
<div class="a" style="left:441.8px;top:172.42px;font:normal normal 6.8px/8.84px 'Liberation Sans',sans-serif;color:#111;transform:scaleX(0.8914);transform-origin:0 0;-webkit-text-stroke:0.12px #111;">Address1</div>
<div class="a" style="left:441.8px;top:182.13px;font:normal normal 6.8px/8.84px 'Liberation Sans',sans-serif;color:#111;transform:scaleX(0.8984);transform-origin:0 0;-webkit-text-stroke:0.12px #111;">Address2</div>
<div class="a" style="left:441.8px;top:191.84px;font:normal normal 6.8px/8.84px 'Liberation Sans',sans-serif;color:#111;transform:scaleX(0.8704);transform-origin:0 0;-webkit-text-stroke:0.12px #111;">City</div>
<div class="a" style="left:441.8px;top:201.55px;font:normal normal 6.8px/8.84px 'Liberation Sans',sans-serif;color:#111;transform:scaleX(0.863);transform-origin:0 0;-webkit-text-stroke:0.12px #111;">State</div>
<div class="a" style="left:441.8px;top:211.26px;font:normal normal 6.8px/8.84px 'Liberation Sans',sans-serif;color:#111;transform:scaleX(0.9203);transform-origin:0 0;-webkit-text-stroke:0.12px #111;">Zip</div>
<div class="a" style="left:441.8px;top:220.97px;font:normal normal 6.8px/8.84px 'Liberation Sans',sans-serif;color:#111;transform:scaleX(0.8896);transform-origin:0 0;-webkit-text-stroke:0.12px #111;">PreferredPhone</div>
<div class="a" style="left:441.8px;top:230.68px;font:normal normal 6.8px/8.84px 'Liberation Sans',sans-serif;color:#111;transform:scaleX(0.8879);transform-origin:0 0;-webkit-text-stroke:0.12px #111;">PreferredPhoneType</div>
<div class="a" style="left:441.8px;top:240.39px;font:normal normal 6.8px/8.84px 'Liberation Sans',sans-serif;color:#111;transform:scaleX(0.9235);transform-origin:0 0;-webkit-text-stroke:0.12px #111;">Email</div>
<div class="a" style="left:441.8px;top:250.1px;font:normal normal 6.8px/8.84px 'Liberation Sans',sans-serif;color:#111;transform:scaleX(0.8923);transform-origin:0 0;-webkit-text-stroke:0.12px #111;">tblHRData.EmployeeID</div>
<div class="a" style="left:441.8px;top:259.81px;font:normal normal 6.8px/8.84px 'Liberation Sans',sans-serif;color:#111;transform:scaleX(0.8535);transform-origin:0 0;-webkit-text-stroke:0.12px #111;">StartSalary</div>
<div class="a" style="left:441.8px;top:269.52px;font:normal normal 6.8px/8.84px 'Liberation Sans',sans-serif;color:#111;transform:scaleX(0.9206);transform-origin:0 0;-webkit-text-stroke:0.12px #111;">Hours</div>
<div class="a" style="left:441.8px;top:279.23px;font:normal normal 6.8px/8.84px 'Liberation Sans',sans-serif;color:#111;transform:scaleX(0.8834);transform-origin:0 0;-webkit-text-stroke:0.12px #111;">HireDate</div>
<div class="a" style="left:441.8px;top:288.94px;font:normal normal 6.8px/8.84px 'Liberation Sans',sans-serif;color:#111;transform:scaleX(0.9169);transform-origin:0 0;-webkit-text-stroke:0.12px #111;">BenefitElections</div>
<div class="a" style="left:4.6px;top:391.05px;font:normal normal 7px/9.1px 'Liberation Sans',sans-serif;color:#333;transform:scaleX(0.887);transform-origin:0 0;-webkit-text-stroke:0.12px #333;">Design View</div>
<div class="a" style="left:494px;top:390.95px;font:normal normal 7px/9.1px 'Liberation Sans',sans-serif;color:#333;transform:scaleX(0.825);transform-origin:0 0;-webkit-text-stroke:0.12px #333;">Num Lock</div>
</div></body></html>
